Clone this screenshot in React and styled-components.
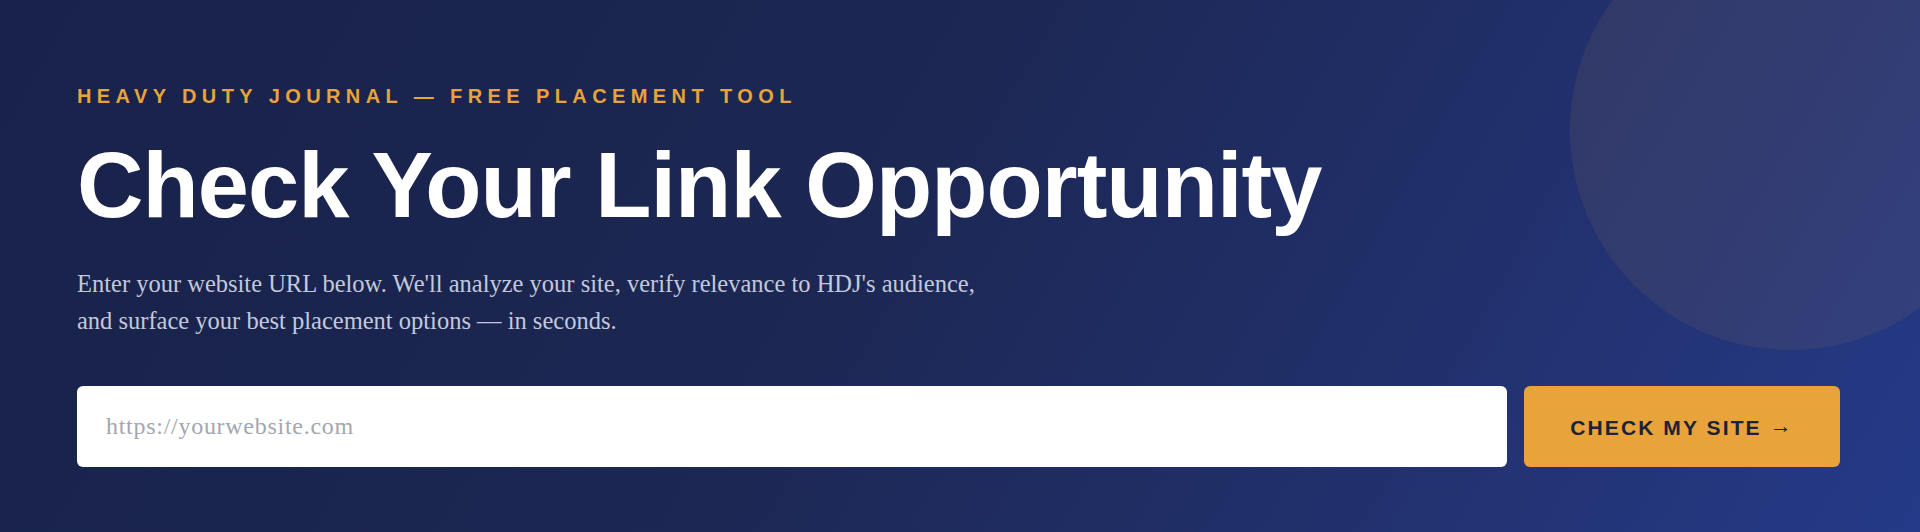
import React from 'react'
import styled, { createGlobalStyle } from 'styled-components'

const GlobalStyle = createGlobalStyle`
  html, body {
    margin: 0;
    padding: 0;
  }
  body {
    font-family: "Liberation Sans", Arial, sans-serif;
    background: #18224a;
  }
`

// hero block with the gradient
const Hero = styled.section`
  box-sizing: border-box;
  position: relative;
  overflow: hidden;
  height: 532px;
  padding: 85px 80px 0 77px;
  background: linear-gradient(120deg, #18224a 0%, #1c2753 45%, #22316e 75%, #253a88 100%);
`

// soft circle top right
const Glow = styled.div`
  position: absolute;
  top: -90px;
  right: -90px;
  width: 440px;
  height: 440px;
  border-radius: 50%;
  background: rgba(232, 163, 58, 0.08);
  pointer-events: none;
`

const Content = styled.div`
  position: relative;
  display: flex;
  flex-direction: column;
`

const Eyebrow = styled.div`
  font-family: "Liberation Sans", Arial, sans-serif;
  font-size: 20px;
  font-weight: 700;
  line-height: 23px;
  letter-spacing: 0.27em;
  color: #e8a33a;
  text-transform: uppercase;
`

const Title = styled.h1`
  margin: 27px 0 0;
  font-family: "Liberation Sans", Arial, sans-serif;
  font-size: 92px;
  font-weight: 700;
  line-height: 101px;
  letter-spacing: -0.01em;
  color: #ffffff;
`

const Lead = styled.p`
  margin: 29px 0 0;
  max-width: 925px;
  font-family: "Liberation Serif", "Times New Roman", serif;
  font-size: 24.5px;
  line-height: 37px;
  color: #c3c9dc;
`

const Form = styled.form`
  display: flex;
  gap: 17px;
  margin-top: 47px;
`

const UrlInput = styled.input`
  box-sizing: border-box;
  flex: 1;
  height: 81px;
  padding: 0 29px;
  border: none;
  border-radius: 6px;
  background: #ffffff;
  font-family: "Liberation Serif", "Times New Roman", serif;
  font-size: 24px;
  letter-spacing: 0.03em;
  color: #1a2035;
  outline: none;

  &::placeholder {
    color: #a3a6b0;
  }
`

const SubmitButton = styled.button`
  box-sizing: border-box;
  flex: 0 0 316px;
  height: 81px;
  border: none;
  border-radius: 6px;
  background: #e8a33a;
  font-family: "Liberation Sans", Arial, sans-serif;
  font-size: 21px;
  font-weight: 700;
  letter-spacing: 0.1em;
  color: #1c2236;
  cursor: pointer;
`

const Arrow = styled.span`
  display: inline-block;
  font-size: 22px;
  vertical-align: 2px;
`

export default function App() {
  return (
    <>
      <GlobalStyle />
      <Hero>
        <Glow />
        <Content>
          <Eyebrow>Heavy Duty Journal — Free Placement Tool</Eyebrow>
          <Title>Check Your Link Opportunity</Title>
          <Lead>
            Enter your website URL below. We'll analyze your site, verify relevance to HDJ's audience,
            and surface your best placement options — in seconds.
          </Lead>
          <Form onSubmit={(e) => e.preventDefault()}>
            <UrlInput type="url" placeholder="https://yourwebsite.com" />
            <SubmitButton type="submit">
              CHECK MY SITE <Arrow>→</Arrow>
            </SubmitButton>
          </Form>
        </Content>
      </Hero>
    </>
  )
}
